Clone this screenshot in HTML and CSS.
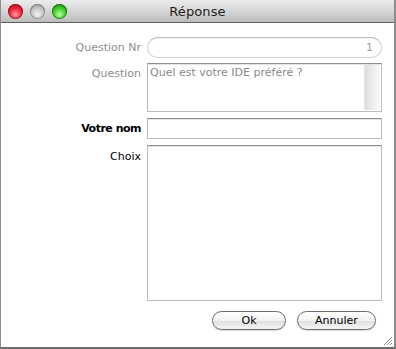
FILE: index.html
```html
<!DOCTYPE html>
<html lang="fr">
<head>
<meta charset="utf-8">
<title>Réponse</title>
<link rel="stylesheet" href="styles.css">
</head>
<body>
<div class="window">
  <div class="titlebar">
    <div class="lights">
      <span class="light red"></span>
      <span class="light gray"></span>
      <span class="light green"></span>
    </div>
    <div class="title">Réponse</div>
  </div>
  <div class="content">
    <div class="form">
      <label class="lbl dim row-nr">Question Nr</label>
      <div class="pill"><span>1</span></div>

      <label class="lbl dim row-q">Question</label>
      <div class="area area-q">
        <div class="area-text">Quel est votre IDE préféré ?</div>
        <div class="scroll"></div>
      </div>

      <label class="lbl bold row-nom">Votre nom</label>
      <div class="field"></div>

      <label class="lbl row-choix">Choix</label>
      <div class="area area-choix"></div>
    </div>
    <div class="buttons">
      <button class="btn btn-ok">Ok</button>
      <button class="btn btn-cancel">Annuler</button>
    </div>
  </div>
  <svg class="grip" width="10" height="10" viewBox="0 0 10 10">
    <path d="M9 1 L1 9 M9 4 L4 9 M9 7 L7 9" stroke="#8a8a8a" stroke-width="1"/>
    <path d="M10 2 L2 10 M10 5 L5 10 M10 8 L8 10" stroke="#ffffff" stroke-width="1"/>
  </svg>
</div>
</body>
</html>
```

FILE: styles.css
```css
* { box-sizing: border-box; }
html, body { margin: 0; padding: 0; background: #ffffff; }
body {
  width: 396px;
  height: 349px;
  overflow: hidden;
  font-family: "DejaVu Sans", "Liberation Sans", sans-serif;
}
.window {
  position: relative;
  width: 396px;
  height: 349px;
  background: #ffffff;
  border-left: 1px solid #8c8c8c;
  border-right: 2px solid #8c8c8c;
  border-bottom: 2px solid #6c6c6c;
  display: flex;
  flex-direction: column;
}
.titlebar {
  position: relative;
  height: 23px;
  flex: none;
  background: linear-gradient(to bottom, #ececec 0%, #d8d8d8 45%, #bcbcbc 100%);
  border-bottom: 1px solid #5e5e5e;
  display: flex;
  align-items: center;
  justify-content: center;
}
.lights {
  position: absolute;
  left: 7px;
  top: 4px;
  display: flex;
  gap: 7px;
}
.light {
  width: 15px;
  height: 15px;
  border-radius: 50%;
  display: block;
}
.light.red {
  background: radial-gradient(circle at 50% 70%, #ff9aa6 0%, #f0283c 45%, #a8001a 100%);
  box-shadow: inset 0 0 0 1px rgba(120,0,10,0.6);
}
.light.gray {
  background: radial-gradient(circle at 50% 70%, #f2f2f2 0%, #c4c4c4 50%, #8e8e8e 100%);
  box-shadow: inset 0 0 0 1px rgba(90,90,90,0.5);
}
.light.green {
  background: radial-gradient(circle at 50% 70%, #b6ff9c 0%, #3ccb28 50%, #137d08 100%);
  box-shadow: inset 0 0 0 1px rgba(10,80,0,0.6);
}
.title {
  font-size: 13px;
  color: #1e1e1e;
  letter-spacing: 0.1px;
  padding-top: 1px;
}
.content {
  flex: 1;
  display: flex;
  flex-direction: column;
  padding-top: 14px;
}
.form {
  display: grid;
  grid-template-columns: 140px 235px;
  grid-template-rows: 21px 48px 21px 156px;
  column-gap: 6px;
  row-gap: 6px;
  font-size: 11px;
}
.lbl {
  text-align: right;
  color: #000;
  padding-top: 4px;
  white-space: nowrap;
}
.lbl.dim { color: #8e8e8e; }
.lbl.bold { font-weight: bold; letter-spacing: -0.5px; }
.lbl.row-q { padding-top: 3px; }
.lbl.row-choix { padding-top: 5px; }
.pill {
  height: 21px;
  border: 1px solid #d0d0d0;
  border-top-color: #bdbdbd;
  border-radius: 11px;
  box-shadow: inset 0 1px 1px rgba(0,0,0,0.06);
  display: flex;
  align-items: center;
  justify-content: flex-end;
  padding-right: 8px;
  color: #a0a0a0;
  font-size: 11px;
}
.area, .field {
  border: 1px solid #bcbcbc;
  border-top-color: #8e8e8e;
  box-shadow: inset 0 1px 0 #e4e4e4;
  background: #fff;
}
.area-q {
  display: flex;
  padding: 1px;
  margin-top: -1px;
  height: 49px;
}
.area-text {
  flex: 1;
  color: #8a8a8a;
  padding-left: 1px;
  padding-top: 1px;
}
.scroll {
  width: 16px;
  background: linear-gradient(to right, #dcdcdc 0%, #ececec 45%, #f8f8f8 100%);
  border-left: 1px solid #e6e6e6;
}
.buttons {
  display: flex;
  justify-content: flex-end;
  gap: 11px;
  padding-right: 18px;
  margin-top: 10px;
}
.btn {
  height: 19px;
  border-radius: 10px;
  border: 1px solid #6e6e6e;
  background: linear-gradient(to bottom, #ffffff 0%, #f2f2f2 50%, #e2e2e2 55%, #f4f4f4 100%);
  font-family: "DejaVu Sans", "Liberation Sans", sans-serif;
  font-size: 11px;
  color: #000;
  padding: 0;
  line-height: 16px;
  box-shadow: 0 1px 1px rgba(0,0,0,0.15);
}
.btn-ok { width: 74px; }
.btn-cancel { width: 79px; }
.grip {
  position: absolute;
  right: 1px;
  bottom: 1px;
}
```
